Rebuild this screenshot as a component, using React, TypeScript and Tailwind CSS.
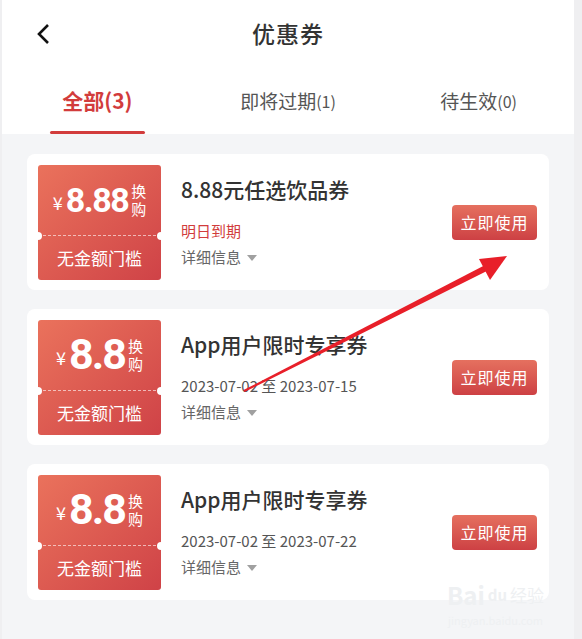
import React from 'react';

interface Coupon {
  amount: string;
  title: string;
  sub: string;
  subRed?: boolean;
}

const coupons: Coupon[] = [
  { amount: '8.88', title: '8.88元任选饮品券', sub: '明日到期', subRed: true },
  { amount: '8.8', title: 'App用户限时专享券', sub: '2023-07-02 至 2023-07-15' },
  { amount: '8.8', title: 'App用户限时专享券', sub: '2023-07-02 至 2023-07-22' },
];

const Stub: React.FC<{ amount: string }> = ({ amount }) => {
  const big = amount.length < 4;
  return (
    <div className="relative w-[123px] h-[115px] shrink-0 rounded-[3px] bg-gradient-to-br from-[#ea725c] to-[#cf4247] text-white flex flex-col">
      {/* top: price */}
      <div className="h-[71px] flex items-center justify-center border-b border-dashed border-white/60">
        <span className="text-[18px] mt-[6px] mr-[3px]">¥</span>
        <span
          className={`font-bold leading-none font-['Roboto',sans-serif] pr-[2px] ${
            big ? 'text-[43px] tracking-[-2px]' : 'text-[34px] tracking-[-1.5px]'
          }`}
        >
          {amount}
        </span>
        <span className="w-[15px] ml-[1px] text-[15px] leading-[18px] break-all">换购</span>
      </div>
      {/* notches */}
      <div className="absolute left-[-4px] top-[67px] w-2 h-2 rounded-full bg-white" />
      <div className="absolute right-[-4px] top-[67px] w-2 h-2 rounded-full bg-white" />
      {/* bottom */}
      <div className="flex-1 flex items-center justify-center text-[17px]">无金额门槛</div>
    </div>
  );
};

const CouponCard: React.FC<{ c: Coupon }> = ({ c }) => (
  <div className="h-[136px] bg-white rounded-[8px] flex items-center pl-[11px] pr-[12px]">
    <Stub amount={c.amount} />
    <div className="self-stretch pt-[20px] pl-[20px] flex flex-col">
      <div className="text-[21px] leading-[30px] font-medium text-[#333]">{c.title}</div>
      <div
        className={`mt-[16px] text-[15px] leading-[22px] ${c.subRed ? 'text-[#d13c3c]' : 'text-[#555]'}`}
      >
        {c.sub}
      </div>
      <div className="mt-[4px] text-[15px] leading-[22px] text-[#666] flex items-center">
        详细信息
        <svg width="10" height="6" viewBox="0 0 10 6" className="ml-[6px] mt-[1px]">
          <path d="M0 0 L10 0 L5 6 Z" fill="#a0a0a0" />
        </svg>
      </div>
    </div>
    <button className="ml-auto w-[85px] h-[35px] rounded-[4px] bg-gradient-to-b from-[#e5705f] to-[#cd4044] text-white text-[16px] tracking-[1px]">
      立即使用
    </button>
  </div>
);

export default function App() {
  return (
    <div className="relative w-[582px] h-[639px] overflow-hidden bg-[#efeff1] flex font-['Noto_Sans_CJK_SC','Roboto',sans-serif]">
      <div className="w-[572px] ml-[2px] bg-[#f4f5f7]">
        {/* Header */}
        <div className="bg-white h-[134px] flex flex-col">
          <div className="relative h-[66px] flex items-center justify-center">
            <svg
              width="16"
              height="22"
              viewBox="0 0 16 22"
              className="absolute left-[33px] top-[23px]"
            >
              <path d="M13 2 L4 11 L13 20" fill="none" stroke="#111" strokeWidth="2.6" />
            </svg>
            <span className="text-[23px] font-medium text-[#333] tracking-[1px]">优惠券</span>
          </div>
          <div className="flex-1 grid grid-cols-3">
            <div className="relative flex items-center justify-center">
              <span className="text-[21px] font-bold text-[#d23c3c] mt-[2px]">全部(3)</span>
              <div className="absolute bottom-0 left-[48px] w-[95px] h-[3px] rounded-full bg-[#d23c3c]" />
            </div>
            <div className="flex items-center justify-center text-[#555] mt-[2px]">
              <span className="text-[19px]">即将过期</span>
              <span className="text-[16px]">(1)</span>
            </div>
            <div className="flex items-center justify-center text-[#555] mt-[2px]">
              <span className="text-[19px]">待生效</span>
              <span className="text-[16px]">(0)</span>
            </div>
          </div>
        </div>

        {/* Coupon list */}
        <div className="px-[25px] pt-[20px] flex flex-col gap-[19px]">
          {coupons.map((c, i) => (
            <CouponCard key={i} c={c} />
          ))}
        </div>
      </div>

      {/* annotation arrow */}
      <svg className="absolute inset-0 pointer-events-none" width="582" height="639">
        <polygon points="244.5,391.9 243.5,390.1 486.6,264.3 489.4,269.7" fill="#e81f29" />
        <polygon points="507,256 479,259 490,280" fill="#e81f29" />
      </svg>

      {/* watermark */}
      <div className="absolute left-[447px] top-[580px] flex flex-col items-center text-[#eef0f2] pointer-events-none">
        <div className="flex items-end gap-[3px] text-[24px] font-bold leading-[30px]">
          <span>Bai</span>
          <span className="text-[15px]">du</span>
          <span className="text-[17px] font-normal">经验</span>
        </div>
        <div className="text-[11px] leading-[16px] mt-[2px]">jingyan.baidu.com</div>
      </div>
    </div>
  );
}
